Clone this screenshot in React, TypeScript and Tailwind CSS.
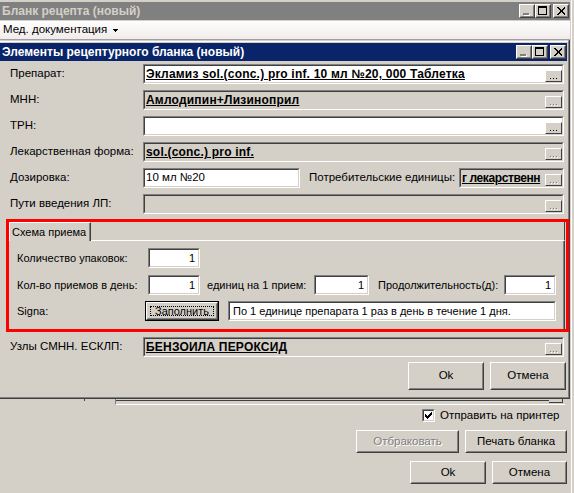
import React from "react";

const FONT = "font-['Liberation_Sans',Arial,sans-serif]";

function Raised({ className = "", inner = "", children }: { className?: string; inner?: string; children?: React.ReactNode }) {
  return (
    <div className={`border border-t-white border-l-white border-r-[#404040] border-b-[#404040] bg-[#d4d0c8] ${className}`}>
      <div className={`h-full w-full border border-t-[#d4d0c8] border-l-[#d4d0c8] border-r-[#808080] border-b-[#808080] flex items-center justify-center ${inner}`}>
        {children}
      </div>
    </div>
  );
}

function Cap({ kind }: { kind: "min" | "max" | "close" }) {
  return (
    <Raised className="w-[16px] h-[14px] shrink-0">
      <svg width="12" height="10" viewBox="0 0 12 10" shapeRendering="crispEdges">
        {kind === "min" && (
          <>
            <rect x="3" y="8" width="6" height="2" fill="#ffffff" />
            <rect x="2" y="7" width="6" height="2" fill="#808080" />
          </>
        )}
        {kind === "max" && (
          <>
            <rect x="1.5" y="0.5" width="8" height="8" fill="none" stroke="#000" />
            <rect x="1" y="1" width="9" height="1" fill="#000" />
          </>
        )}
        {kind === "close" && (
          <path d="M2 1 L3 1 L6 4 L9 1 L10 1 L10 2 L7 5 L10 8 L10 9 L9 9 L6 6 L3 9 L2 9 L2 8 L5 5 L2 2 Z" fill="#000" />
        )}
      </svg>
    </Raised>
  );
}

function Dots({ on }: { on: boolean }) {
  const c = on ? "#000" : "#808080";
  return (
    <div className="shrink-0 self-end w-[17px] h-[12px] border border-t-white border-l-white border-r-[#404040] border-b-[#404040] bg-[#d4d0c8] flex items-end justify-center pb-[1px]">
      <svg width="9" height="2" viewBox="0 0 9 2" shapeRendering="crispEdges">
        <rect x="1" y="0" width="1" height="1" fill={c} />
        <rect x="4" y="0" width="1" height="1" fill={c} />
        <rect x="7" y="0" width="1" height="1" fill={c} />
        {!on && (
          <>
            <rect x="2" y="1" width="1" height="1" fill="#fff" />
            <rect x="5" y="1" width="1" height="1" fill="#fff" />
            <rect x="8" y="1" width="1" height="1" fill="#fff" />
          </>
        )}
      </svg>
    </div>
  );
}

function Field({
  className = "",
  gray = false,
  children,
  dots,
  right = false,
}: {
  className?: string;
  gray?: boolean;
  children?: React.ReactNode;
  dots?: boolean;
  right?: boolean;
}) {
  return (
    <div className={`h-[20px] shrink-0 border border-t-[#808080] border-l-[#808080] border-r-white border-b-white ${className}`}>
      <div
        className={`h-full w-full border border-t-[#404040] border-l-[#404040] border-r-[#d4d0c8] border-b-[#d4d0c8] ${
          gray ? "bg-[#d4d0c8]" : "bg-white"
        } flex`}
      >
        <div className={`flex-1 min-w-0 overflow-hidden whitespace-nowrap flex items-center ${right ? "justify-end pr-[3px]" : "pl-[1px]"}`}>
          {children}
        </div>
        {dots !== undefined && <Dots on={dots} />}
      </div>
    </div>
  );
}

function Link({ children, tight = false }: { children: React.ReactNode; tight?: boolean }) {
  return (
    <span className={`font-bold text-[12px] ${tight ? "tracking-[-0.4px]" : "tracking-[0.2px]"} underline underline-offset-[1px]`}>{children}</span>
  );
}

function Btn({ className = "", children, disabled = false }: { className?: string; children: React.ReactNode; disabled?: boolean }) {
  return (
    <Raised className={`shrink-0 ${className}`}>
      <span className={`text-[11.5px] whitespace-nowrap ${disabled ? "text-[#808080] [text-shadow:1px_1px_0_#ffffff]" : ""}`}>{children}</span>
    </Raised>
  );
}

function Row({ label, children }: { label: string; children: React.ReactNode }) {
  return (
    <div className="h-[20px] flex items-center">
      <div className="w-[143px] pl-[10px] shrink-0 text-[11.5px] whitespace-nowrap">{label}</div>
      {children}
    </div>
  );
}

export default function App() {
  return (
    <div className={`relative w-[574px] h-[493px] overflow-hidden bg-[#d4d0c8] text-black leading-none ${FONT} flex`}>
      <div className="w-[570px] flex flex-col shrink-0">
        {/* outer title bar */}
        <div className="h-[21px] pt-[2px] pb-[1px] shrink-0">
          <div className="h-[18px] bg-[#808080] flex items-center justify-between pl-[2px] pr-[1px]">
            <span className="font-bold text-[12px] text-[#d4d0c8]">Бланк рецепта (новый)</span>
            <div className="flex items-center">
              <Cap kind="min" />
              <Cap kind="max" />
              <div className="w-[2px]" />
              <Cap kind="close" />
            </div>
          </div>
        </div>
        {/* menu bar */}
        <div className="h-[19px] shrink-0 border-b border-b-[#a0a0a0] bg-linear-to-b from-[#fefdfd] to-[#f1ecec] flex items-center pl-[3px] gap-[6px]">
          <span className="text-[11.5px]">Мед. документация</span>
          <svg width="5" height="3" viewBox="0 0 5 3" shapeRendering="crispEdges">
            <path d="M0 0 H5 L2.5 3 Z" fill="#000" />
          </svg>
        </div>

        {/* inner window */}
        <div className="h-[359px] shrink-0 border-r border-b border-r-[#404040] border-b-[#404040]">
          <div className="h-full border-r border-b border-r-[#808080] border-b-[#808080] border-t border-t-[#d4d0c8] flex flex-col">
            <div className="border-t border-t-white pt-[1px] pr-[1px] flex flex-col h-full">
              <div className="h-[18px] shrink-0 bg-[#0a246a] flex items-center justify-between pl-[2px] pr-[1px]">
                <span className="font-bold text-[12px] text-white">Элементы рецептурного бланка (новый)</span>
                <div className="flex items-center">
                  <Cap kind="min" />
                  <Cap kind="max" />
                  <div className="w-[2px]" />
                  <Cap kind="close" />
                </div>
              </div>
              {/* content */}
              <div className="flex-1 flex flex-col pt-[3px]">
                <div className="flex flex-col gap-[6px]">
                  <Row label="Препарат:">
                    <Field className="w-[421px]" dots={true}>
                      <Link>Экламиз sol.(conc.) pro inf. 10 мл №20, 000 Таблетка</Link>
                    </Field>
                  </Row>
                  <Row label="МНН:">
                    <Field className="w-[421px]" gray dots={false}>
                      <Link>Амлодипин+Лизиноприл</Link>
                    </Field>
                  </Row>
                  <Row label="ТРН:">
                    <Field className="w-[421px]" dots={true} />
                  </Row>
                  <Row label="Лекарственная форма:">
                    <Field className="w-[421px]" gray dots={false}>
                      <Link>sol.(conc.) pro inf.</Link>
                    </Field>
                  </Row>
                  <Row label="Дозировка:">
                    <Field className="w-[157px]">
                      <span className="text-[11.5px]">10 мл №20</span>
                    </Field>
                    <div className="w-[159px] pl-[9px] text-[11.5px] whitespace-nowrap shrink-0">Потребительские единицы:</div>
                    <Field className="w-[105px]" gray dots={false}>
                      <Link tight>г лекарственн</Link>
                    </Field>
                  </Row>
                  <Row label="Пути введения ЛП:">
                    <Field className="w-[421px]" gray dots={false} />
                  </Row>
                </div>

                {/* tab control */}
                <div className="mt-[5px] ml-[6px] w-[559px] h-[113px] flex flex-col pt-[3px]">
                  <div className="h-[19px] flex shrink-0">
                    <div className="w-[3px] border-b border-b-white" />
                    <div className="w-[82px] border-t border-l border-t-white border-l-white border-r border-r-[#404040]">
                      <div className="h-full border-r border-r-[#808080] flex items-center pl-[2px] text-[11px] whitespace-nowrap overflow-hidden">Схема приема</div>
                    </div>
                    <div className="flex-1 border-b border-b-white border-r border-r-[#404040]" />
                  </div>
                  <div className="flex-1 ml-[1px] border-l border-l-white border-r border-r-[#404040]">
                    <div className="h-full border-r border-r-[#808080] pt-[7px] pl-[9px] flex flex-col text-[11px] whitespace-nowrap">
                      <div className="h-[20px] flex items-center">
                        <div className="w-[131px] shrink-0">Количество упаковок:</div>
                        <Field className="w-[52px]" right>
                          1
                        </Field>
                      </div>
                      <div className="h-[20px] mt-[7px] flex items-center">
                        <div className="w-[131px] shrink-0">Кол-во приемов в день:</div>
                        <Field className="w-[52px]" right>
                          1
                        </Field>
                        <div className="w-[114px] pl-[7px] shrink-0">единиц на 1 прием:</div>
                        <Field className="w-[55px]" right>
                          1
                        </Field>
                        <div className="w-[135px] pl-[9px] shrink-0">Продолжительность(д):</div>
                        <Field className="w-[52px]" right>
                          1
                        </Field>
                      </div>
                      <div className="h-[20px] mt-[6px] flex items-center">
                        <div className="w-[128px] shrink-0">Signa:</div>
                        <div className="w-[74px] h-[20px] shrink-0 border border-black">
                          <Raised className="h-full w-full" inner="p-[2px]">
                            <div className="h-full w-full border border-dotted border-black flex items-center justify-center">Заполнить</div>
                          </Raised>
                        </div>
                        <div className="w-[9px] shrink-0" />
                        <Field className="w-[328px]">
                          <span className="pl-[2px]">По 1 единице препарата 1 раз в день в течение 1 дня.</span>
                        </Field>
                      </div>
                    </div>
                  </div>
                </div>

                <div className="mt-[5px]">
                  <Row label="Узлы СМНН. ЕСКЛП:">
                    <Field className="w-[421px]" gray dots={false}>
                      <Link>БЕНЗОИЛА ПЕРОКСИД</Link>
                    </Field>
                  </Row>
                </div>

                <div className="mt-[5px] flex justify-end gap-[6px] pr-[1px]">
                  <Btn className="w-[76px] h-[28px]">Ok</Btn>
                  <Btn className="w-[76px] h-[28px]">Отмена</Btn>
                </div>
              </div>
            </div>
          </div>
        </div>

        {/* outer window rest */}
        <div className="flex-1 flex flex-col">
          <div className="h-[6px] flex shrink-0">
            <div className="ml-[84px] w-[1px] h-[2px] bg-[#404040]" />
            <div className="ml-[30px] w-[450px] h-[6px] border-l border-l-[#808080] border-b border-b-white flex">
              <div className="flex-1 h-[1px] mt-[1px] bg-[#404040]" />
              <div className="w-[14px] h-[4px] mr-[2px] border-r border-b border-r-[#404040] border-b-[#404040] bg-[#d4d0c8]" />
            </div>
          </div>
          <div className="mt-[4px] h-[13px] flex items-center pl-[422px] shrink-0">
            <div className="w-[13px] h-[13px] shrink-0 border border-t-[#808080] border-l-[#808080] border-r-white border-b-white">
              <div className="h-full w-full border border-t-[#404040] border-l-[#404040] border-r-[#d4d0c8] border-b-[#d4d0c8] bg-white flex items-center justify-center">
                <svg width="7" height="7" viewBox="0 0 7 7" shapeRendering="crispEdges">
                  <path d="M0 2 H1 V3 H2 V4 H3 V3 H4 V2 H5 V1 H6 V0 H7 V3 H6 V4 H5 V5 H4 V6 H3 V7 H2 V6 H1 V5 H0 Z" fill="#000" />
                </svg>
              </div>
            </div>
            <span className="ml-[5px] text-[11.5px] whitespace-nowrap">Отправить на принтер</span>
          </div>
          <div className="mt-[8px] flex justify-end gap-[6px] pr-[3px] shrink-0">
            <Btn className="w-[103px] h-[23px]" disabled>
              Отбраковать
            </Btn>
            <Btn className="w-[102px] h-[23px]">Печать бланка</Btn>
          </div>
          <div className="mt-[8px] flex justify-end gap-[6px] pr-[3px] shrink-0">
            <Btn className="w-[76px] h-[23px]">Ok</Btn>
            <Btn className="w-[75px] h-[23px]">Отмена</Btn>
          </div>
        </div>
      </div>
      {/* outer right frame */}
      <div className="w-[4px] shrink-0 flex">
        <div className="w-[1px] bg-[#d4d0c8]" />
        <div className="w-[1px] bg-white" />
        <div className="flex-1 bg-[#d4d0c8]" />
      </div>

      {/* red annotation box */}
      <div className="absolute left-[6px] top-[219px] w-[563px] h-[113px] border-[3px] border-[#ff0000] pointer-events-none" />
    </div>
  );
}
